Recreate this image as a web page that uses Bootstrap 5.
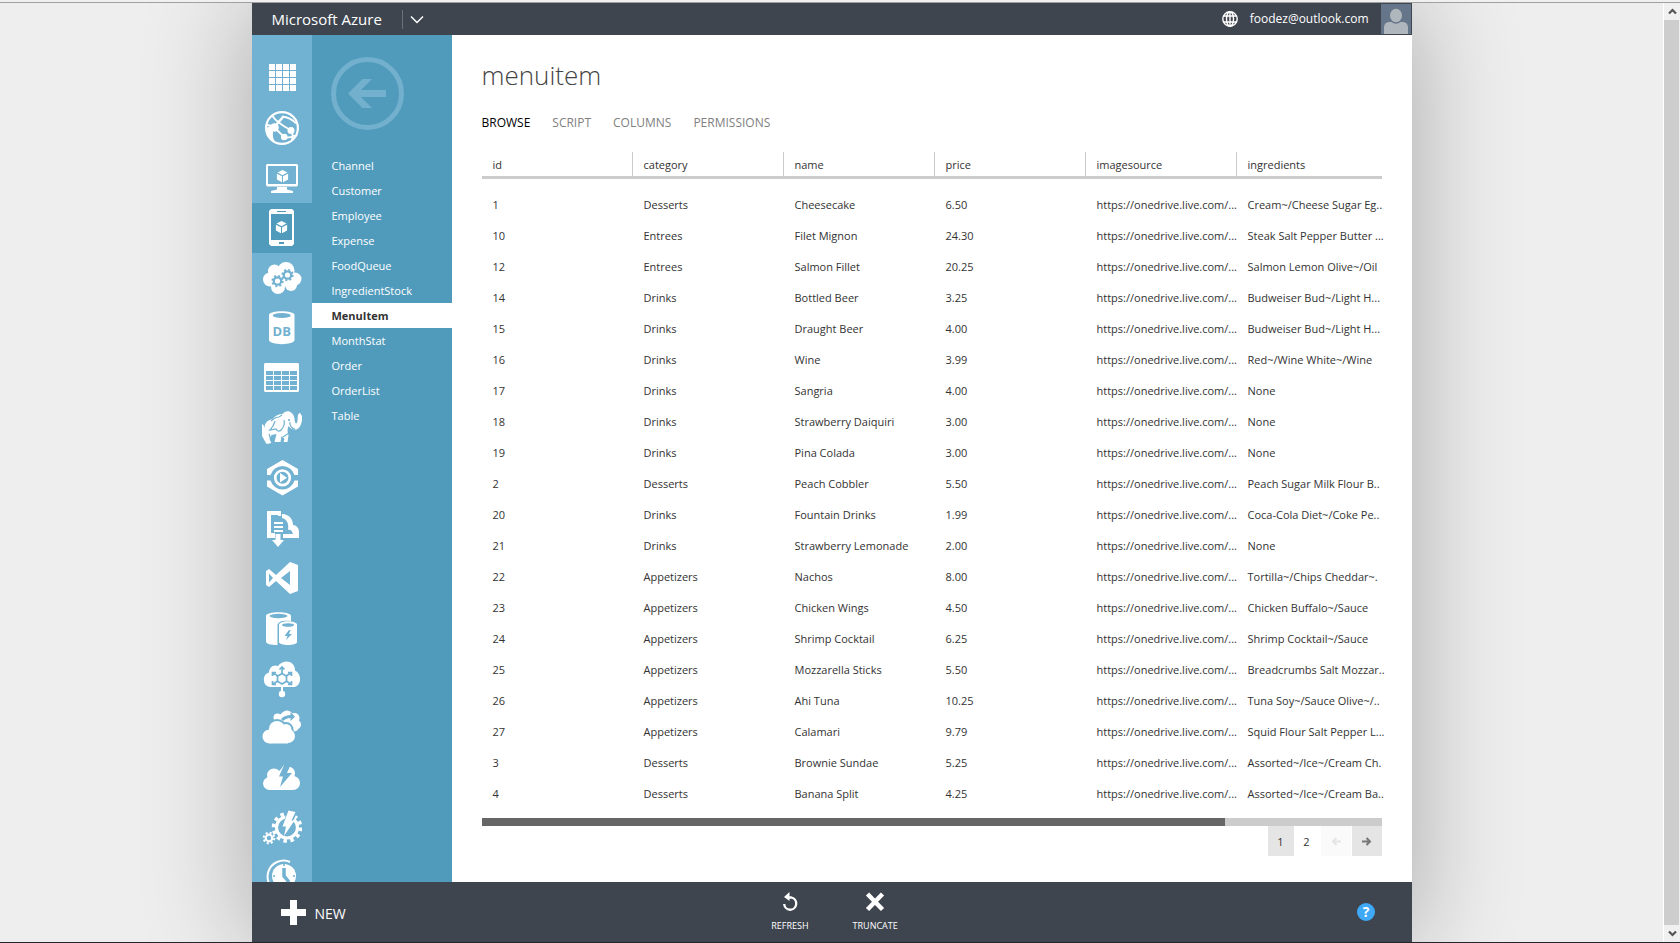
<!DOCTYPE html>
<html lang="en">
<head>
<meta charset="utf-8">
<meta name="viewport" content="width=device-width, initial-scale=1">
<title>menuitem - Microsoft Azure</title>
<link href="https://cdn.jsdelivr.net/npm/bootstrap@5.3.0/dist/css/bootstrap.min.css" rel="stylesheet">
<style>
  :root { --slate:#3e454f; --rail:#71b1d1; --side:#509bbc; --rule:#cccccc; }
  body { font-family:"Open Sans","Noto Sans",sans-serif; font-size:11px; line-height:16px; color:#333; background:#eee; }
  a { color:inherit; text-decoration:none; }
  button { border:0; background:none; padding:0; color:inherit; }
  svg { display:block; }
  .window-edge { height:3px; background:#f0f0f0; border-bottom:1px solid #a0a0a0; }
  .taskbar-edge { height:1px; background:#24262c; }
  .portal { width:100%; max-width:1160px; background:#fff; box-shadow:0 0 100px rgba(0,0,0,.3); }
  .topbar { height:32px; background:var(--slate); color:#fff; padding-left:20px; }
  .brand { font-size:15px; line-height:30px; }
  .brand-menu { height:19px; border-left:1px solid #6b717a; margin-left:20px; padding-left:7px; }
  .account { font-size:12px; }
  .avatar { width:30px; height:30px; background:#66768a; margin:0 1px 0 12px; }
  .rail { width:60px; background:var(--rail); padding-top:18px; color:#fff; --hole:var(--rail); }
  .rail a { height:50px; }
  .rail a.active { background:var(--side); --hole:var(--side); }
  .side { width:140px; background:var(--side); color:#fff; padding-top:22px; }
  .back { margin:0 0 23px 19px; width:73px; }
  .side li a { display:block; line-height:25px; padding-left:20px; }
  .side li a.active { background:#fff; color:#333; font-weight:700; }
  .page-main { padding:20px 30px 0; }
  .page-title { font-size:26px; line-height:40px; font-weight:300; color:#444; margin:0; }
  .views { gap:22px; margin-top:18px; font-size:12px; line-height:20px; color:#808080; }
  .views .active { color:#000; }
  .grid-box { margin-top:19px; }
  .grid-table { width:100%; table-layout:fixed; border-collapse:separate; border-spacing:0; white-space:nowrap; }
  .grid-table col { width:151px; }
  .grid-table col:last-child { width:auto; }
  .grid-table th { height:27px; padding:2px 0 1px 11px; line-height:21px; font-weight:400; border-bottom:3px solid var(--rule); background:linear-gradient(var(--rule),var(--rule)) right / 1px 100% no-repeat; }
  .grid-table th:last-child { background:none; }
  .grid-table td { padding:0 0 0 11px; line-height:31px; }
  .grid-table tbody tr:first-child td { padding-top:10px; }
  .hscroll { height:8px; margin-top:9px; background:var(--rule); }
  .hscroll div { height:8px; background:#666; }
  .pager button { height:30px; width:26px; padding-top:1px; }
  .pager .step { width:30px; margin-left:1px; background:#e5e5e5; color:#777; }
  .pager .current { background:#e5e5e5; }
  .pager .step:disabled { background:#fafafa; color:#e5e5e5; }
  .command-bar { height:60px; background:var(--slate); color:#fff; padding:0 29px; }
  .new-item { gap:9px; font-size:14px; }
  .new-item span { padding-top:3px; }
  .commands { gap:44px; padding-left:6px; font-size:9px; line-height:12px; }
  .vscroll { width:17px; background:#f0f0f0; border-left:1px solid #fff; }
  .vscroll button { height:17px; }
  .vscroll div { width:15px; background:#cdcdcd; }
</style>
</head>
<body class="vh-100 overflow-hidden d-flex flex-column">
<svg width="0" height="0" class="position-absolute" aria-hidden="true">
  <defs>
    <g id="cube"><path d="M0-6 5-3.400 0-.8-5-3.400z"/><path d="M-5.600-2.300-.5.200V6.300L-5.600 3.500z"/><path d="M5.600-2.300.5.200V6.300L5.600 3.500z"/></g>
  </defs>
</svg>
<div class="window-edge flex-shrink-0"></div>
<div class="d-flex flex-grow-1 overflow-hidden">
  <div class="flex-grow-1 d-flex justify-content-center overflow-hidden">
    <div class="portal d-flex flex-column">
      <header class="topbar d-flex align-items-center flex-shrink-0">
        <a class="brand" href="#">Microsoft Azure</a>
        <button class="brand-menu d-flex align-items-center" aria-label="Open menu"><svg width="14" height="9" fill="none" stroke="#fff" stroke-width="1.500"><path d="M1 1.500 7 7.500l6-6"/></svg></button>
        <button class="ms-auto me-2 pe-1" aria-label="Language"><svg width="16" height="16" viewBox="0 0 16 16" fill="none" stroke="#fff" stroke-width="1.400"><circle cx="8" cy="8" r="7.200"/><ellipse cx="8" cy="8" rx="3.500" ry="7.200"/><path d="M8 1v14M1.500 5h13M1.500 11h13"/></svg></button>
        <a class="account" href="#">foodez@outlook.com</a>
        <a class="avatar" href="#" aria-label="Profile"><svg width="30" height="30" fill="#b0b7bc"><path d="M3 30V24c0-4 2-6 6-6h1.500a7 7 0 0 0 9 0H21c4 0 6 2 6 6v6z"/><ellipse cx="15" cy="11.500" rx="6" ry="6.700"/></svg></a>
      </header>
      <div class="d-flex flex-grow-1 overflow-hidden">
        <nav class="rail flex-shrink-0 overflow-hidden" aria-label="Services">
          <a href="#" class="d-flex align-items-center justify-content-center" aria-label="All items"><svg width="40" height="40" fill="#fff"><path d="M7 6h6v6H7zM14 6h6v6h-6zM21 6h6v6h-6zM28 6h6v6h-6zM7 13h6v6H7zM14 13h6v6h-6zM21 13h6v6h-6zM28 13h6v6h-6zM7 20h6v6H7zM14 20h6v6h-6zM21 20h6v6h-6zM28 20h6v6h-6zM7 27h6v6H7zM14 27h6v6h-6zM21 27h6v6h-6zM28 27h6v6h-6z"/></svg></a>
          <a href="#" class="d-flex align-items-center justify-content-center" aria-label="Web sites"><svg width="40" height="40" fill="none" stroke="#fff" stroke-width="2"><circle cx="20" cy="20" r="15.900" stroke-width="2.200"/><path d="M12.500 19 21 9" stroke-width="2.600"/><path d="M10 7.500c4 6 10 10 18.500 14.500M13 20l9 9M10 22c-1 4 0 8 2 12M20 8.500c6 .5 10 2.500 14 7M29.500 23c1.500 3 1.500 5 .5 9M22 29.500c3 .5 7 0 11-2M5 17l6 1" stroke-width="1.800"/><g fill="#fff" stroke="none"><circle cx="12.500" cy="19.500" r="4.300"/><path d="M4 20l7-3v8l-1 7-5-5z"/><circle cx="29" cy="22.500" r="3.500"/><circle cx="22.200" cy="29" r="3.300"/></g></svg></a>
          <a href="#" class="d-flex align-items-center justify-content-center" aria-label="Virtual machines"><svg width="40" height="40" fill="#fff"><path fill-rule="evenodd" d="M5 6h30l1 1v20l-1 1.500H5L4 27V7zM6 8v18h28V8zM15 28h10v3.500l6 1.500v2H9v-2l6-1.500z"/><use href="#cube" x="20.500" y="18"/></svg></a>
          <a href="#" class="active d-flex align-items-center justify-content-center" aria-label="Mobile services"><svg width="40" height="40" fill="#fff"><path fill-rule="evenodd" d="M9 1h21l2 2v33l-2 2H9l-2-2V3zM9 6v26h21V6zM15 3v1h9V3zM17 34v2h5v-2z"/><use href="#cube" x="19.500" y="19"/></svg></a>
          <a href="#" class="d-flex align-items-center justify-content-center" aria-label="Cloud services"><svg width="40" height="40" fill="#fff"><circle cx="8" cy="21.500" r="7"/><circle cx="12.500" cy="13" r="6.500"/><circle cx="24" cy="12.500" r="8.500"/><circle cx="33" cy="21" r="6.500"/><circle cx="29" cy="27" r="6"/><circle cx="16" cy="29" r="7"/><path d="M8 12h24v16H8z"/><g fill="none" style="stroke:var(--hole)"><g stroke-width="2.200"><circle cx="15.500" cy="23" r="3.700"/><circle cx="25.500" cy="17" r="3.700"/></g><circle cx="15.500" cy="23" r="5.300" stroke-width="1.700" stroke-dasharray="2.080 2.080"/><circle cx="25.500" cy="17" r="5.300" stroke-width="1.700" stroke-dasharray="2.080 2.080"/></g></svg></a>
          <a href="#" class="d-flex align-items-center justify-content-center" aria-label="SQL databases"><svg width="40" height="40" fill="#fff"><path d="M7 7c0-5 25.500-5 25.500 0v25c0 5.500-25.500 5.500-25.500 0z"/><ellipse cx="19.800" cy="7.500" rx="9" ry="2.600" style="fill:var(--hole)"/><text x="19.800" y="27.500" text-anchor="middle" font-size="13" font-weight="700" style="fill:var(--hole)">DB</text></svg></a>
          <a href="#" class="d-flex align-items-center justify-content-center" aria-label="Storage"><svg width="40" height="40" fill="#fff"><path fill-rule="evenodd" d="M3 5h33l1 1v27l-1 1H3l-1-1V6zM4 13v4h7v-4zM12 13v4h7v-4zM20 13v4h7v-4zM28 13v4h7v-4zM4 18v4h7v-4zM12 18v4h7v-4zM20 18v4h7v-4zM28 18v4h7v-4zM4 23v4h7v-4zM12 23v4h7v-4zM20 23v4h7v-4zM28 23v4h7v-4zM4 28v4h7v-4zM12 28v4h7v-4zM20 28v4h7v-4zM28 28v4h7v-4z"/></svg></a>
          <a href="#" class="d-flex align-items-center justify-content-center" aria-label="HDInsight"><svg width="40" height="40" fill="#fff"><path d="M0 16c2 1 2 2 2.500 4 0-5 3-8 8-9 2-3 6-5 10-5 2-3 7-4 9-1 3 2 3 6 3.500 9 .5 2 2 2 2.500-1 .5-3-.5-6 2-8 1 0 1.500 1 1.500 2l1.500 1c-.5 7-2 12-6 13.500-4 .5-6-1-8-3.500-1 3-1.500 5 0 9l-1 7h-4l1-3-3-3-1 6h-6l2-8-5 1-2 4 2 4-5 1-5-9-1-5z"/><g fill="none" stroke-width="1.200" style="stroke:var(--hole)"><path d="M9 13c2-2 5-4 8-4l3-2M13 13c-1 4-3 7-5 9l6-1c1 2 3 3 5 1 3-3 4-6 3-10M28 14c-1 3 2 7 5 7M7 26l3 9M21 29l6-4"/></g><circle cx="27" cy="12" r="1" style="fill:var(--hole)"/></svg></a>
          <a href="#" class="d-flex align-items-center justify-content-center" aria-label="Media services"><svg width="40" height="40" fill="#fff"><path d="M20.500 2 36 11v6h-3.500a12.500 12.500 0 0 0-24 0H5v-6zM20.500 37.500 36 28.500v-6h-3.500a12.500 12.500 0 0 1-24 0H5v6z"/><circle cx="20.500" cy="19.800" r="7.300" fill="none" stroke="#fff" stroke-width="2.600"/><path d="M18 15v9.500l7-4.700z"/></svg></a>
          <a href="#" class="d-flex align-items-center justify-content-center" aria-label="Import and export"><svg width="40" height="40" fill="#fff"><path d="M5 3h14v5h-3V7H9v18h4v5H5z"/><path d="M20 6c7 0 11 5 11 11 4 0 6 4 6 7v6H21v-4h10c-1-4-3-5-5-4 1-6-1-11-6-12z"/><path d="M12 14h9v2h-9zM12 18h9v2h-9zM12 22h9v2h-9zM13.500 26h5v6H22l-6 7-6-7h3.500z"/></svg></a>
          <a href="#" class="d-flex align-items-center justify-content-center" aria-label="Visual Studio Online"><svg width="40" height="40" fill="#fff"><path fill-rule="evenodd" d="m28 4 8 3v26l-8 3-14-13-7 6-3-2V13l3-2 7 6zM28 13l-9 7 9 7zM7 15.500v9l4-4.500z"/></svg></a>
          <a href="#" class="d-flex align-items-center justify-content-center" aria-label="Cache"><svg width="40" height="40" fill="#fff"><path d="M4 8c0-5 25-5 25 0v5c-7-1-13 0-13.500 4v20C9 37 4 36 4 33.500z"/><ellipse cx="16.500" cy="8" rx="9" ry="2.200" style="fill:var(--hole)"/><path d="M17 17c0-5 18-5 18 0v17c0 4-18 4-18 0z"/><ellipse cx="26" cy="17" rx="6" ry="1.800" style="fill:var(--hole)"/><path d="m27 22-4.500 6h3l-1.500 4 6-6h-3l1.500-4z" style="fill:var(--hole)"/></svg></a>
          <a href="#" class="d-flex align-items-center justify-content-center" aria-label="Service bus"><svg width="40" height="40" fill="#fff"><path d="M8 29a7.500 7.500 0 0 1-1-14.500C7 9 12 6 16 8c5-7 17-6 17 4.500 8 4 6 16.500-2 16.500z"/><path d="M19 27h2v6h-2z"/><circle cx="20" cy="36" r="3.200"/><g fill="none" stroke-width="1.700" style="stroke:var(--hole)"><path d="m20 15.500 4.500 2.700v5L20 26l-4.500-2.800v-5z"/><path d="M20 15V9M17.500 11.500 20 9l2.500 2.500M24 18l5-3M26 14.500h3.500V18M24 23l5 3M29.500 23v3.500H26M16 18l-5-3M14 14.500h-3.500V18M16 23l-5 3M10.500 23v3.500H14"/></g></svg></a>
          <a href="#" class="d-flex align-items-center justify-content-center" aria-label="Recovery services"><svg width="40" height="40" fill="#fff"><circle cx="15.500" cy="9.500" r="4"/><circle cx="25" cy="8.500" r="6"/><circle cx="32.500" cy="10" r="5"/><circle cx="34" cy="16.500" r="5"/><path d="M12 12 20 5l14 3 2 14-4 2-8-9z"/><path d="M19 11c3-3 6-4 9.500-4V4l4.500 4.700-4.500 4.300v-3c-3 0-5 1-7.500 3z" style="fill:var(--hole)"/><g stroke-width="4" style="stroke:var(--hole)"><circle cx="15" cy="21" r="8"/><circle cx="24" cy="21.500" r="5.500"/><circle cx="26.500" cy="28.500" r="6"/></g><circle cx="15" cy="21" r="8"/><circle cx="24" cy="21.500" r="5.500"/><circle cx="7.500" cy="28.500" r="7"/><circle cx="26" cy="28" r="7"/><path d="M8 22h18v13.500H8z"/></svg></a>
          <a href="#" class="d-flex align-items-center justify-content-center" aria-label="BizTalk services"><svg width="40" height="40" fill="#fff"><circle cx="7.500" cy="25.500" r="6.500"/><circle cx="12" cy="17.500" r="7"/><circle cx="31" cy="25" r="7"/><circle cx="26" cy="15.500" r="7"/><path d="M8 17h22v15H8zM22 7l-6 8h6z"/><path d="m22.500 6-5.500 12.500h4L18 29l12-14h-5l4-9z" style="fill:var(--hole)"/></svg></a>
          <a href="#" class="d-flex align-items-center justify-content-center" aria-label="Automation"><svg width="40" height="40" fill="none" stroke="#fff"><circle cx="25" cy="19.500" r="10.500" stroke-width="3.200"/><circle cx="25" cy="19.500" r="13.500" stroke-width="3.600" stroke-dasharray="3.530 3.530"/><circle cx="7" cy="30" r="3.300" stroke-width="2.200"/><circle cx="7" cy="30" r="5.300" stroke-width="2" stroke-dasharray="2.080 2.080"/><path d="m25 1 11 2-5 10-9 2z" stroke="none" style="fill:var(--hole)"/><path d="m26.500 2.500 7 1.500-4 8.500h3L22 28l2-9.500h-3.500z" stroke="none" fill="#fff"/></svg></a>
          <a href="#" class="d-flex align-items-center justify-content-center" aria-label="Scheduler"><svg width="40" height="40" fill="none" stroke="#fff"><circle cx="22" cy="18" r="12" fill="#fff" stroke="none"/><path d="M8 27C3 19 6 8 15 4c5-2 9-2 13 0" stroke-width="2"/><path d="M22 10v8l5 6" stroke-width="3.500" style="stroke:var(--hole)"/><path d="M22 6v2M11 18h2M31 18h2" stroke-width="1.500" style="stroke:var(--hole)"/></svg></a>
        </nav>
        <nav class="side flex-shrink-0" aria-label="Tables">
          <button class="back d-block" aria-label="Back"><svg width="73" height="73"><g opacity=".7"><circle cx="36.500" cy="36.500" r="34" fill="none" stroke="#81bad6" stroke-width="5"/><path d="M17 36.500 31.500 22H41L30 33h25v7H30l11 11h-9.500z" fill="#81bad6"/></g></svg></button>
          <ul class="list-unstyled mb-0">
            <li><a href="#">Channel</a></li><li><a href="#">Customer</a></li><li><a href="#">Employee</a></li><li><a href="#">Expense</a></li><li><a href="#">FoodQueue</a></li><li><a href="#">IngredientStock</a></li><li><a href="#" class="active" aria-current="page">MenuItem</a></li><li><a href="#">MonthStat</a></li><li><a href="#">Order</a></li><li><a href="#">OrderList</a></li><li><a href="#">Table</a></li>
          </ul>
        </nav>
        <main class="page-main flex-grow-1 overflow-hidden">
          <h1 class="page-title">menuitem</h1>
          <nav class="views d-flex" aria-label="Views"><a href="#" class="active">BROWSE</a><a href="#">SCRIPT</a><a href="#">COLUMNS</a><a href="#">PERMISSIONS</a></nav>
          <div class="grid-box">
            <table class="grid-table">
              <colgroup><col><col><col><col><col><col></colgroup>
              <thead><tr><th>id</th><th>category</th><th>name</th><th>price</th><th>imagesource</th><th>ingredients</th></tr></thead>
              <tbody>
                <tr><td>1</td><td>Desserts</td><td>Cheesecake</td><td>6.50</td><td>https://onedrive.live.com/...</td><td>Cream~/Cheese Sugar Eg..</td></tr>
                <tr><td>10</td><td>Entrees</td><td>Filet Mignon</td><td>24.30</td><td>https://onedrive.live.com/...</td><td>Steak Salt Pepper Butter ...</td></tr>
                <tr><td>12</td><td>Entrees</td><td>Salmon Fillet</td><td>20.25</td><td>https://onedrive.live.com/...</td><td>Salmon Lemon Olive~/Oil</td></tr>
                <tr><td>14</td><td>Drinks</td><td>Bottled Beer</td><td>3.25</td><td>https://onedrive.live.com/...</td><td>Budweiser Bud~/Light H...</td></tr>
                <tr><td>15</td><td>Drinks</td><td>Draught Beer</td><td>4.00</td><td>https://onedrive.live.com/...</td><td>Budweiser Bud~/Light H...</td></tr>
                <tr><td>16</td><td>Drinks</td><td>Wine</td><td>3.99</td><td>https://onedrive.live.com/...</td><td>Red~/Wine White~/Wine</td></tr>
                <tr><td>17</td><td>Drinks</td><td>Sangria</td><td>4.00</td><td>https://onedrive.live.com/...</td><td>None</td></tr>
                <tr><td>18</td><td>Drinks</td><td>Strawberry Daiquiri</td><td>3.00</td><td>https://onedrive.live.com/...</td><td>None</td></tr>
                <tr><td>19</td><td>Drinks</td><td>Pina Colada</td><td>3.00</td><td>https://onedrive.live.com/...</td><td>None</td></tr>
                <tr><td>2</td><td>Desserts</td><td>Peach Cobbler</td><td>5.50</td><td>https://onedrive.live.com/...</td><td>Peach Sugar Milk Flour B..</td></tr>
                <tr><td>20</td><td>Drinks</td><td>Fountain Drinks</td><td>1.99</td><td>https://onedrive.live.com/...</td><td>Coca-Cola Diet~/Coke Pe..</td></tr>
                <tr><td>21</td><td>Drinks</td><td>Strawberry Lemonade</td><td>2.00</td><td>https://onedrive.live.com/...</td><td>None</td></tr>
                <tr><td>22</td><td>Appetizers</td><td>Nachos</td><td>8.00</td><td>https://onedrive.live.com/...</td><td>Tortilla~/Chips Cheddar~.</td></tr>
                <tr><td>23</td><td>Appetizers</td><td>Chicken Wings</td><td>4.50</td><td>https://onedrive.live.com/...</td><td>Chicken Buffalo~/Sauce</td></tr>
                <tr><td>24</td><td>Appetizers</td><td>Shrimp Cocktail</td><td>6.25</td><td>https://onedrive.live.com/...</td><td>Shrimp Cocktail~/Sauce</td></tr>
                <tr><td>25</td><td>Appetizers</td><td>Mozzarella Sticks</td><td>5.50</td><td>https://onedrive.live.com/...</td><td>Breadcrumbs Salt Mozzar..</td></tr>
                <tr><td>26</td><td>Appetizers</td><td>Ahi Tuna</td><td>10.25</td><td>https://onedrive.live.com/...</td><td>Tuna Soy~/Sauce Olive~/..</td></tr>
                <tr><td>27</td><td>Appetizers</td><td>Calamari</td><td>9.79</td><td>https://onedrive.live.com/...</td><td>Squid Flour Salt Pepper L...</td></tr>
                <tr><td>3</td><td>Desserts</td><td>Brownie Sundae</td><td>5.25</td><td>https://onedrive.live.com/...</td><td>Assorted~/Ice~/Cream Ch.</td></tr>
                <tr><td>4</td><td>Desserts</td><td>Banana Split</td><td>4.25</td><td>https://onedrive.live.com/...</td><td>Assorted~/Ice~/Cream Ba..</td></tr>
              </tbody>
            </table>
          </div>
          <div class="hscroll"><div style="width:82.6%"></div></div>
          <nav class="pager d-flex justify-content-end" aria-label="Pages">
            <button class="current" aria-current="page">1</button><button>2</button>
            <button class="step d-flex align-items-center justify-content-center" disabled aria-label="Previous"><svg width="10" height="9" fill="none" stroke="currentColor" stroke-width="2"><path d="M10 4.500H2M5.500 1 2 4.500 5.500 8"/></svg></button>
            <button class="step d-flex align-items-center justify-content-center" aria-label="Next"><svg width="10" height="9" fill="none" stroke="currentColor" stroke-width="2"><path d="M0 4.500h8M4.500 1 8 4.500 4.500 8"/></svg></button>
          </nav>
        </main>
      </div>
      <footer class="command-bar d-flex align-items-center flex-shrink-0">
        <div class="col d-flex"><button class="new-item d-flex align-items-center"><svg width="25" height="25" fill="#fff"><path d="M9 0h7v9h9v7h-9v9H9v-9H0V9h9z"/></svg><span>NEW</span></button></div>
        <div class="commands d-flex">
          <button class="d-flex flex-column align-items-center gap-2"><svg width="20" height="20" fill="none" stroke="#fff" stroke-width="2.300"><path d="M9 5.500h2.500a6 6.200 0 1 1-7.300 6.500"/><path d="M9.500 0v9L4 5z" fill="#fff" stroke="none"/></svg>REFRESH</button>
          <button class="d-flex flex-column align-items-center gap-2"><svg width="20" height="20" stroke="#fff" stroke-width="4.500"><path d="m2.500 2 15 15.500M17.500 2l-15 15.500"/></svg>TRUNCATE</button>
        </div>
        <div class="col d-flex justify-content-end"><button class="me-2" aria-label="Help"><svg width="18" height="18"><circle cx="9" cy="9" r="9" fill="#3fa9f5"/><text x="9" y="14" text-anchor="middle" font-size="14" font-weight="700" fill="#fff">?</text></svg></button></div>
      </footer>
    </div>
  </div>
  <div class="vscroll d-flex flex-column flex-shrink-0">
    <button class="d-flex align-items-center justify-content-center" aria-label="Scroll up"><svg width="9" height="7" fill="none" stroke="#555" stroke-width="2.200"><path d="M1 5.500 4.500 2 8 5.500"/></svg></button>
    <div class="flex-grow-1"></div>
    <button class="d-flex align-items-center justify-content-center" aria-label="Scroll down"><svg width="9" height="7" fill="none" stroke="#555" stroke-width="2.200"><path d="M1 1.500 4.500 5 8 1.500"/></svg></button>
  </div>
</div>
<div class="taskbar-edge flex-shrink-0"></div>
<script src="https://cdn.jsdelivr.net/npm/bootstrap@5.3.0/dist/js/bootstrap.bundle.min.js"></script>
</body>
</html>
